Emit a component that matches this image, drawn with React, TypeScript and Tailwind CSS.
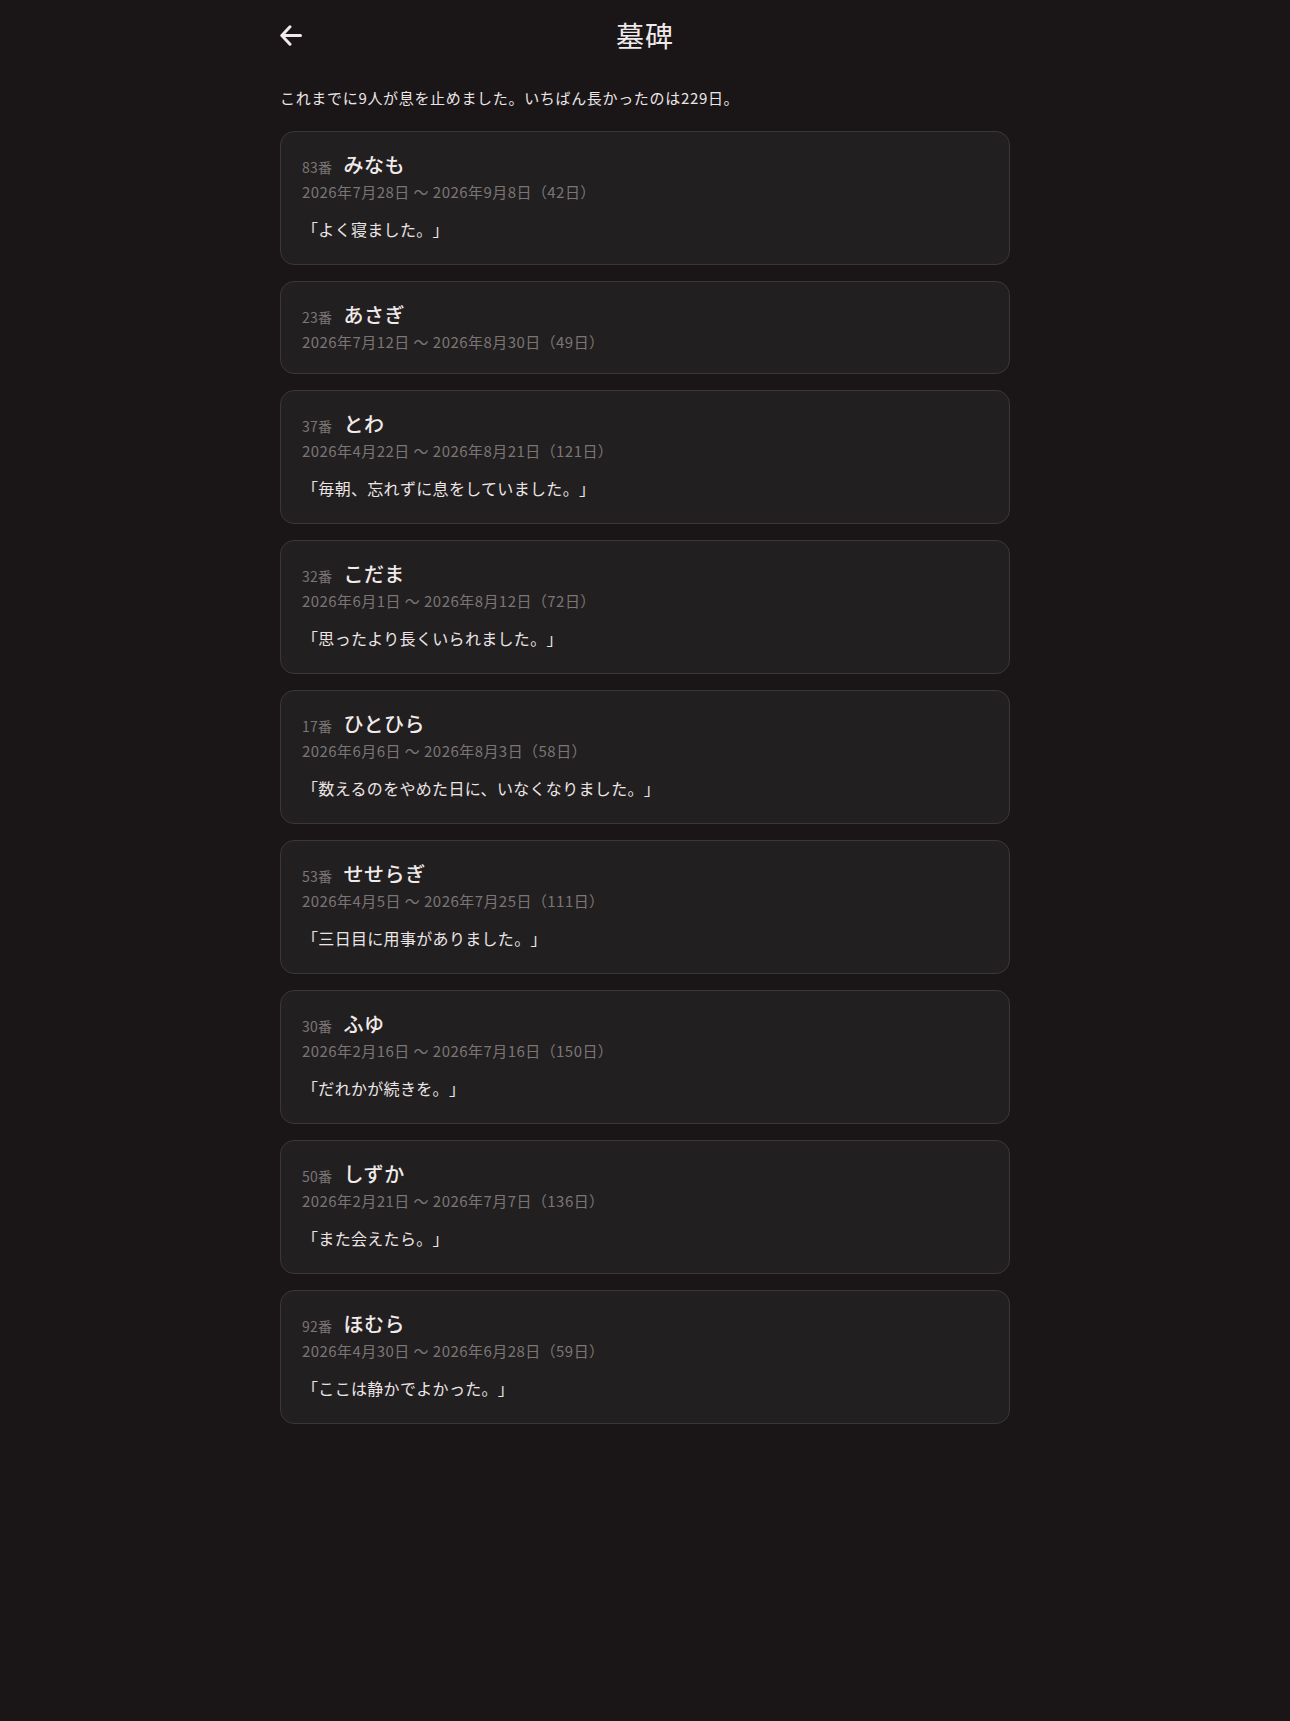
type Grave = {
  no: number
  name: string
  from: string
  to: string
  days: number
  words?: string
}

const GRAVES: Grave[] = [
  { no: 83, name: 'みなも', from: '2026年7月28日', to: '2026年9月8日', days: 42, words: 'よく寝ました。' },
  { no: 23, name: 'あさぎ', from: '2026年7月12日', to: '2026年8月30日', days: 49 },
  { no: 37, name: 'とわ', from: '2026年4月22日', to: '2026年8月21日', days: 121, words: '毎朝、忘れずに息をしていました。' },
  { no: 32, name: 'こだま', from: '2026年6月1日', to: '2026年8月12日', days: 72, words: '思ったより長くいられました。' },
  { no: 17, name: 'ひとひら', from: '2026年6月6日', to: '2026年8月3日', days: 58, words: '数えるのをやめた日に、いなくなりました。' },
  { no: 53, name: 'せせらぎ', from: '2026年4月5日', to: '2026年7月25日', days: 111, words: '三日目に用事がありました。' },
  { no: 30, name: 'ふゆ', from: '2026年2月16日', to: '2026年7月16日', days: 150, words: 'だれかが続きを。' },
  { no: 50, name: 'しずか', from: '2026年2月21日', to: '2026年7月7日', days: 136, words: 'また会えたら。' },
  { no: 92, name: 'ほむら', from: '2026年4月30日', to: '2026年6月28日', days: 59, words: 'ここは静かでよかった。' },
]

/** 墓碑カード */
function GraveCard({ grave }: { grave: Grave }) {
  return (
    <li className="rounded-[14px] border border-[#3b3738] bg-[#221f20] px-[21px] pt-[20px] pb-[20px]">
      <div className="flex h-[26px] items-baseline gap-[11px]">
        <span className="text-[14px] leading-[18px] tracking-[0.02em] text-[#7b7576]">{grave.no}番</span>
        <span className="text-[20px] leading-[26px] font-medium tracking-[0.03em] text-[#f1eaea]">{grave.name}</span>
      </div>
      <p className="mt-[3px] text-[15px] leading-[22px] tracking-[0.03em] text-[#7b7576]">
        {grave.from} 〜 {grave.to}（{grave.days}日）
      </p>
      {grave.words && (
        <p className="mt-[14px] mb-[3px] text-[16px] leading-[24px] tracking-[0.02em] text-[#ece5e5]">「{grave.words}」</p>
      )}
    </li>
  )
}

export default function App() {
  return (
    <div
      className="min-h-[1721px] bg-[#1a1617] text-[#ece5e5] [text-spacing-trim:space-all]"
      style={{ fontFamily: '"Noto Sans CJK JP", "Noto Sans", sans-serif' }}
    >
      <div className="mx-auto w-[730px] pb-16">
        {/* ヘッダー */}
        <header className="grid h-[70px] grid-cols-[60px_1fr_60px] items-center">
          <button className="flex h-[22px] w-[22px] items-center justify-start text-[#f1eaea]" aria-label="戻る">
            <svg width="22" height="21" viewBox="0 0 22 21" fill="none">
              <path
                d="M10 1.8 L1.8 10.5 L10 19.2 M1.8 10.5 H20.5"
                stroke="currentColor"
                strokeWidth="3"
                strokeLinecap="round"
                strokeLinejoin="round"
              />
            </svg>
          </button>
          <h1 className="text-center text-[28px] leading-none font-normal tracking-[0.04em] text-[#f1eaea]">墓碑</h1>
          <div />
        </header>

        <p className="mt-[17px] mb-[22px] text-[15px] leading-[22px] tracking-[0.045em] text-[#ece5e5]">
          これまでに9人が息を止めました。いちばん長かったのは229日。
        </p>

        <ul className="flex flex-col gap-[16px]">
          {GRAVES.map((g) => (
            <GraveCard key={g.no} grave={g} />
          ))}
        </ul>
      </div>
    </div>
  )
}
